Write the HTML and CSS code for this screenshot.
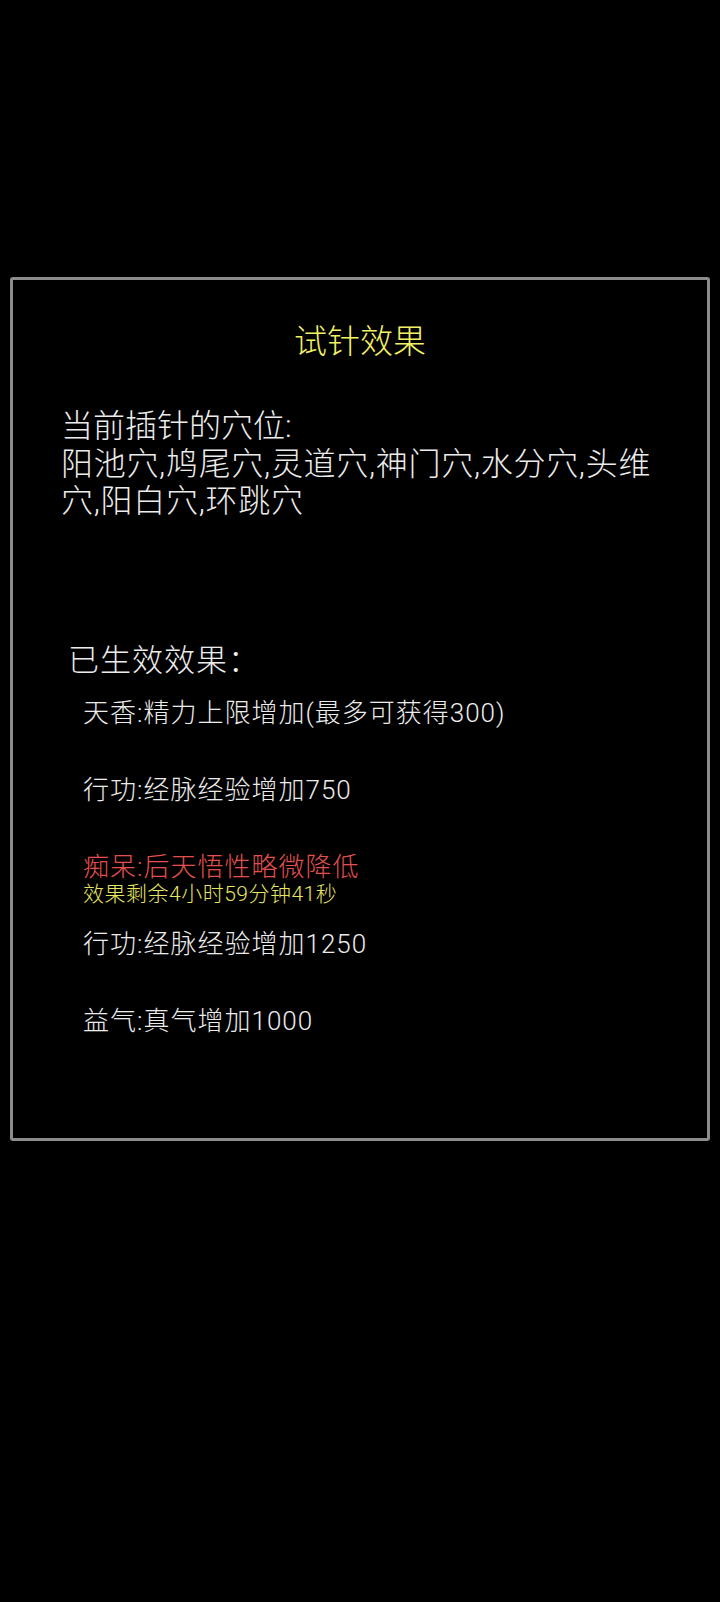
FILE: index.html
```html
<!DOCTYPE html>
<html lang="zh">
<head>
    <meta charset="UTF-8">
    <meta name="viewport" content="width=device-width, initial-scale=1.0">
    <title>试针效果</title>
    <link rel="stylesheet" href="styles.css">
</head>
<body>
    <div class="panel">
        <h1 class="title">试针效果</h1>
        <div class="points">
            <div class="points-label">当前插针的穴位:</div>
            <div class="points-list">阳池穴,鸠尾穴,灵道穴,神门穴,水分穴,头维穴,阳白穴,环跳穴</div>
        </div>
        <div class="effects">
            <h2 class="effects-head">已生效效果：</h2>
            <div class="effect">
                <div class="effect-name">天香:精力上限增加(最多可获得300)</div>
            </div>
            <div class="effect">
                <div class="effect-name">行功:经脉经验增加750</div>
            </div>
            <div class="effect bad">
                <div class="effect-name">痴呆:后天悟性略微降低</div>
                <div class="effect-time">效果剩余4小时59分钟41秒</div>
            </div>
            <div class="effect">
                <div class="effect-name">行功:经脉经验增加1250</div>
            </div>
            <div class="effect">
                <div class="effect-name">益气:真气增加1000</div>
            </div>
        </div>
    </div>
</body>
</html>
```
FILE: styles.css
```css
body {
    margin: 0;
    padding: 277px 0 0 10px;
    height: 1602px;
    box-sizing: border-box;
    background-color: #000;
    color: #ececec;
    font-family: Roboto, "Noto Sans CJK SC", sans-serif;
}
.panel {
    width: 700px;
    height: 864px;
    box-sizing: border-box;
    border: 3px solid #8c8c8c;
    border-radius: 3px;
    padding: 42px 40px 0 48px;
}
.title {
    margin: 0 8px 0 0;
    font-size: 33px;
    line-height: 40px;
    font-weight: 300;
    text-align: center;
    color: #f2f266;
}
.points {
    margin-top: 46px;
    font-size: 32px;
    line-height: 37.5px;
    font-weight: 300;
}
.points-list {
    letter-spacing: 0.7px;
}
.effects {
    margin-top: 122px;
    padding-left: 7px;
}
.effects-head {
    margin: 0 0 19px;
    font-size: 31px;
    line-height: 36px;
    font-weight: 300;
    letter-spacing: 1px;
}
.effect {
    height: 77px;
    padding-left: 15px;
    font-weight: 300;
}
.effect-name {
    font-size: 26px;
    line-height: 30px;
    letter-spacing: 1px;
}
.effect-time {
    font-size: 21px;
    line-height: 24px;
    letter-spacing: 0.5px;
    color: #e6e660;
}
.bad .effect-name {
    color: #e0504e;
}
```
